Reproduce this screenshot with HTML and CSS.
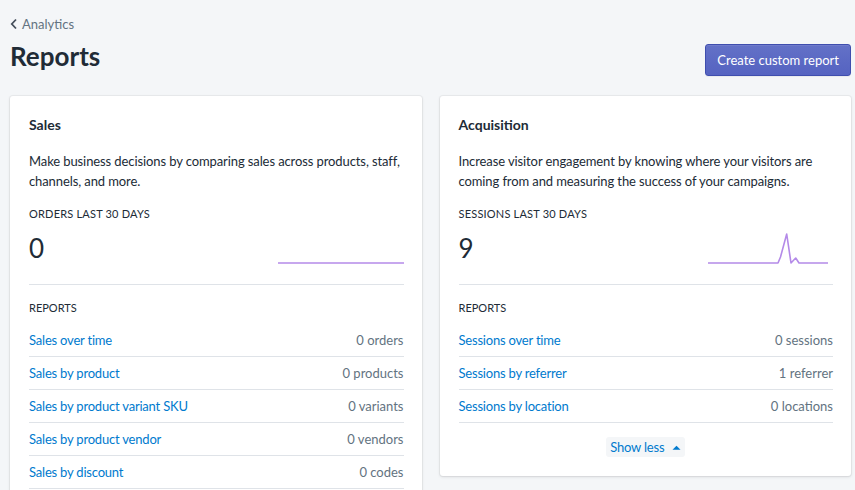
FILE: index.html
```html
<!DOCTYPE html>
<html lang="en">
<head>
<meta charset="utf-8">
<title>Reports</title>
<link rel="stylesheet" href="styles.css">
</head>
<body>
<div class="page">
  <a class="back" href="#">
    <svg class="back-icon" width="8" height="12" viewBox="0 0 8 12"><path d="M6 1.5 L1.8 6 L6 10.5" fill="none" stroke="#454f5b" stroke-width="1.8"/></svg>
    <span>Analytics</span>
  </a>
  <div class="title-bar">
    <h1 class="title">Reports</h1>
    <button class="btn-primary">Create custom report</button>
  </div>
  <div class="cards">
    <section class="card card-long">
      <h2 class="card-title">Sales</h2>
      <p class="card-desc">Make business decisions by comparing sales across products, staff, channels, and more.</p>
      <div class="metric-label">ORDERS LAST 30 DAYS</div>
      <div class="metric-row">
        <div class="metric-value">0</div>
        <svg class="spark" width="126" height="32" viewBox="0 0 126 32"><polyline points="0,31 126,31" fill="none" stroke="#b48ae8" stroke-width="1.6"/></svg>
      </div>
      <div class="reports">
        <div class="reports-label">REPORTS</div>
        <ul class="report-list">
          <li class="report-row"><a href="#">Sales over time</a><span>0 orders</span></li>
          <li class="report-row"><a href="#">Sales by product</a><span>0 products</span></li>
          <li class="report-row"><a href="#">Sales by product variant SKU</a><span>0 variants</span></li>
          <li class="report-row"><a href="#">Sales by product vendor</a><span>0 vendors</span></li>
          <li class="report-row"><a href="#">Sales by discount</a><span>0 codes</span></li>
        </ul>
      </div>
    </section>
    <section class="card card-short">
      <h2 class="card-title">Acquisition</h2>
      <p class="card-desc">Increase visitor engagement by knowing where your visitors are coming from and measuring the success of your campaigns.</p>
      <div class="metric-label">SESSIONS LAST 30 DAYS</div>
      <div class="metric-row">
        <div class="metric-value">9</div>
        <svg class="spark spark-right" width="125" height="32" viewBox="0 0 125 32"><polyline points="0,31 70,31 72.5,25 78.7,2 83,31 87.7,26 91,31 120,31" fill="none" stroke="#b48ae8" stroke-width="1.6" stroke-linejoin="round"/></svg>
      </div>
      <div class="reports">
        <div class="reports-label">REPORTS</div>
        <ul class="report-list">
          <li class="report-row"><a href="#">Sessions over time</a><span>0 sessions</span></li>
          <li class="report-row"><a href="#">Sessions by referrer</a><span>1 referrer</span></li>
          <li class="report-row"><a href="#">Sessions by location</a><span>0 locations</span></li>
        </ul>
        <div class="show-wrap">
          <button class="show-less">Show less <svg width="9" height="5" viewBox="0 0 9 5"><path d="M0.5 4.8 L4.5 0.8 L8.5 4.8 Z" fill="#007ace"/></svg></button>
        </div>
      </div>
    </section>
  </div>
</div>
</body>
</html>
```

FILE: styles.css
```css
* { box-sizing: border-box; }
html, body { margin: 0; padding: 0; }
body {
  background: #f4f6f8;
  font-family: Lato, "Open Sans", sans-serif;
  font-size: 13px;
  color: #212b36;
  overflow: hidden;
}
.page {
  padding: 14px 4px 0 10px;
}
.back {
  display: flex;
  align-items: center;
  gap: 4px;
  color: #637381;
  text-decoration: none;
  height: 20px;
  font-size: 13px;
}
.back-icon { display: block; }
.title-bar {
  display: flex;
  justify-content: space-between;
  align-items: flex-end;
  margin-top: 9px;
}
.title {
  margin: 0;
  font-size: 26px;
  line-height: 26px;
  font-weight: 700;
  color: #212b36;
  padding-bottom: 7px;
}
.btn-primary {
  height: 32px;
  padding: 0 11px;
  white-space: nowrap;
  border: 1px solid #3f4eae;
  border-radius: 3px;
  background: linear-gradient(#6371c7, #5563c1);
  color: #fff;
  font-family: inherit;
  font-size: 13px;
  box-shadow: inset 0 1px 0 0 #6f7bcb, 0 1px 0 0 rgba(22,29,37,.05);
}
.cards {
  display: grid;
  grid-template-columns: 1fr 1fr;
  gap: 18px;
  margin-top: 20px;
  align-items: start;
}
.card {
  background: #fff;
  border-radius: 3px;
  box-shadow: 0 0 0 1px rgba(63,63,68,.05), 0 1px 3px 0 rgba(63,63,68,.15);
  padding: 19px 18px 0 19px;
}
.card-long { padding-bottom: 40px; }
.card-short { padding-bottom: 19px; }
.card-title {
  margin: 0;
  font-size: 14px;
  line-height: 20px;
  font-weight: 700;
}
.card-desc {
  margin: 16px 0 0;
  font-size: 13px;
  line-height: 20px;
  letter-spacing: -0.1px;
}
.metric-label {
  margin-top: 15px;
  font-size: 11px;
  line-height: 16px;
  letter-spacing: 0.2px;
}
.metric-row {
  display: flex;
  justify-content: space-between;
  align-items: flex-end;
  margin-top: 10px;
  padding-bottom: 20px;
  border-bottom: 1px solid #dfe3e8;
}
.metric-value {
  font-size: 26px;
  line-height: 32px;
}
.spark { display: block; }
.reports-label {
  margin-top: 15px;
  font-size: 11px;
  line-height: 16px;
}
.report-list {
  list-style: none;
  margin: 8px 0 0;
  padding: 0;
}
.report-row {
  display: flex;
  justify-content: space-between;
  padding: 6px 0;
  line-height: 20px;
  border-bottom: 1px solid #dfe3e8;
}
.report-row a {
  color: #007ace;
  text-decoration: none;
  letter-spacing: -0.2px;
}
.report-row span { color: #637381; }
.show-wrap {
  display: flex;
  justify-content: center;
  padding-top: 14px;
}
.show-less {
  height: 20px;
  display: flex;
  align-items: center;
  gap: 8px;
  padding: 0 4px;
  border: 0;
  border-radius: 3px;
  background: #f4f6f8;
  color: #007ace;
  font-family: inherit;
  font-size: 13px;
  letter-spacing: -0.2px;
}
```
